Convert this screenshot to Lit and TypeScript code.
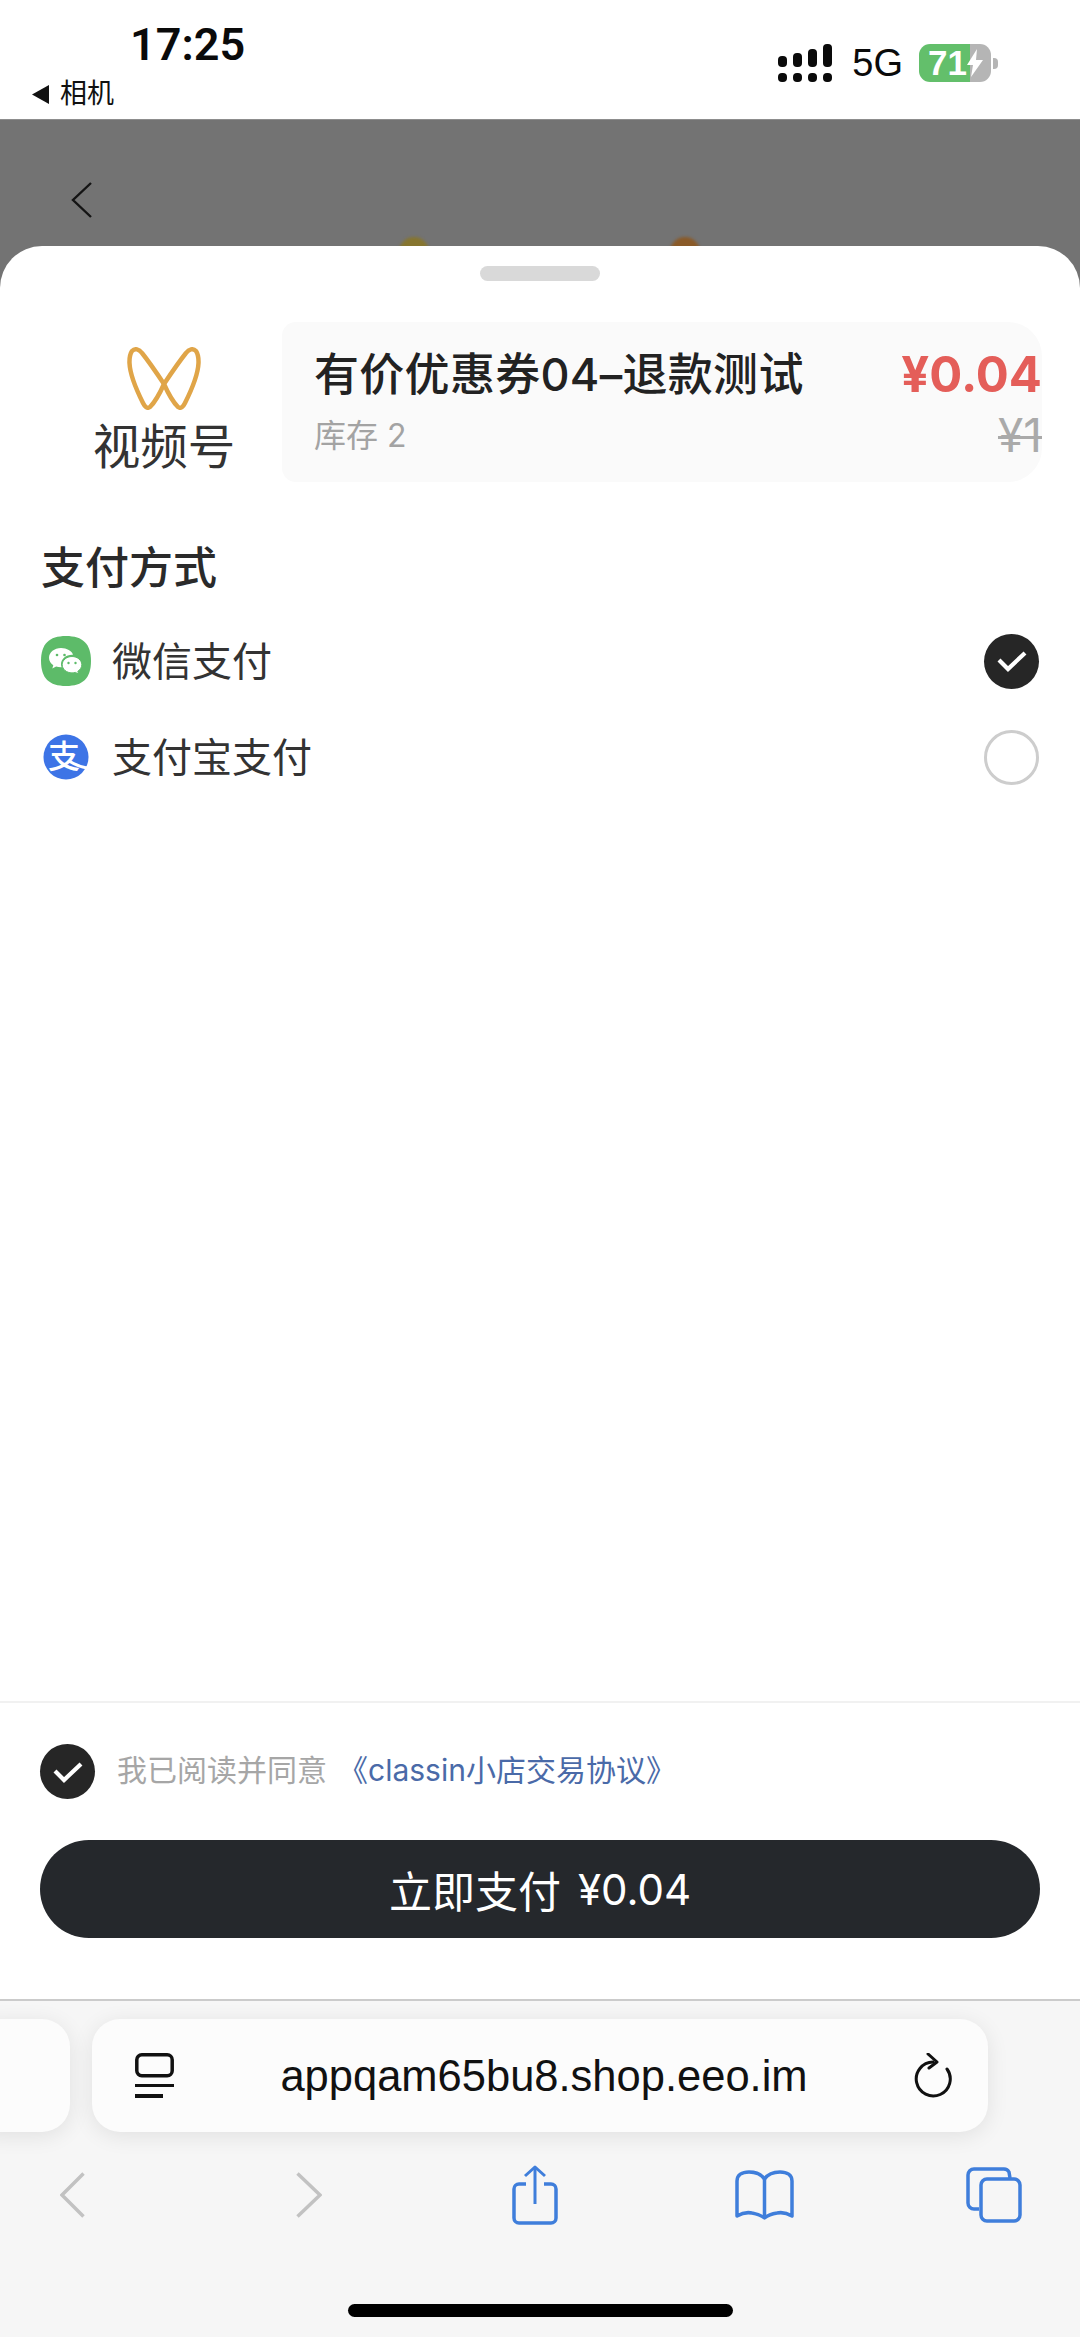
import { css, html, LitElement } from "lit";
import { customElement } from "lit/decorators.js";

const check = html`<svg width="30" height="22" viewBox="0 0 30 22">
  <path d="M2 10l9 9L28 3" fill="none" stroke="#fff" stroke-width="4.200" stroke-linejoin="miter" />
</svg>`;

@customElement("app-root")
export class AppRootElement extends LitElement {
  static styles = css`
    :host {
      display: block;
      width: 1080px;
      height: 2337px;
      overflow: hidden;
      background: #fff;
      font-family: "Inter", "Noto Sans CJK SC", sans-serif;
      color: #333;
    }
    .page {
      display: flex;
      flex-direction: column;
      height: 2337px;
    }

    /* status bar */
    .status {
      height: 119px;
      flex: none;
      display: flex;
      justify-content: space-between;
      box-sizing: border-box;
      background: #fff;
    }
    .status-left {
      display: flex;
      flex-direction: column;
      padding: 21px 0 0 32px;
    }
    .time {
      margin-left: 98px;
      font-size: 45px;
      line-height: 48px;
      font-weight: 600;
      color: #0a0a0a;
      font-family: "Roboto", sans-serif;
    }
    .from {
      display: flex;
      align-items: center;
      gap: 11px;
      margin-top: 11px;
      font-size: 27px;
      line-height: 28px;
      color: #111;
    }
    .status-right {
      display: flex;
      align-items: center;
      height: 38px;
      margin: 44px 82px 0 0;
    }
    .net {
      margin-left: 19px;
      font-size: 38px;
      line-height: 38px;
      color: #0a0a0a;
      font-family: "Liberation Sans", sans-serif;
    }
    .battery {
      position: relative;
      display: flex;
      align-items: center;
      width: 72px;
      height: 38px;
      margin-left: 16px;
      border-radius: 11px;
      background: linear-gradient(90deg, #63bf6b 0 51px, #b5b5b5 51px);
      color: #fff;
      font-size: 35px;
      font-weight: 700;
      line-height: 38px;
      font-family: "Liberation Sans", sans-serif;
    }
    .battery span {
      margin-left: 9px;
    }
    .battery svg {
      position: absolute;
      left: 47px;
      top: 5px;
    }
    .nub {
      width: 5px;
      height: 11px;
      margin-left: 2px;
      border-radius: 0 4px 4px 0;
      background: #b5b5b5;
    }

    /* dimmed page behind the sheet */
    .stage {
      flex: 1;
      display: flex;
      flex-direction: column;
      background: #737373;
      border-top: 1px solid #8d8d8d;
      box-sizing: border-box;
    }
    .under {
      position: relative;
      height: 126px;
      flex: none;
      overflow: hidden;
      padding: 62px 0 0 71px;
      box-sizing: border-box;
    }
    .under svg {
      display: block;
    }
    .blob {
      position: absolute;
      top: 117px;
      width: 30px;
      height: 30px;
      border-radius: 50%;
      filter: blur(1.5px);
    }
    .blob-a {
      left: 399px;
      background: #86752f;
    }
    .blob-b {
      left: 670px;
      background: #8a5a28;
    }

    /* bottom sheet */
    .sheet {
      flex: 1;
      display: flex;
      flex-direction: column;
      background: #fff;
      border-radius: 42px 42px 0 0;
      min-height: 0;
    }
    .handle {
      width: 120px;
      height: 15px;
      margin: 20px auto 0;
      border-radius: 8px;
      background: #d9d9d9;
      flex: none;
    }
    .product {
      display: flex;
      height: 160px;
      margin-top: 41px;
      flex: none;
    }
    .brand {
      width: 282px;
      flex: none;
      display: flex;
      flex-direction: column;
      align-items: center;
      padding: 25px 0 0 46px;
      box-sizing: border-box;
    }
    .brand svg {
      display: block;
    }
    .brand-name {
      margin-top: 11px;
      font-size: 47.500px;
      line-height: 52px;
      color: #333;
      white-space: nowrap;
    }
    .card {
      flex: 1;
      display: flex;
      justify-content: space-between;
      margin-right: 38px;
      padding: 25px 0 0 32px;
      border-radius: 14px 34px 34px 14px;
      background: #fafafa;
    }
    .title {
      font-size: 45px;
      line-height: 56px;
      font-weight: 500;
      letter-spacing: 0.3px;
      color: #222;
      white-space: nowrap;
    }
    .stock {
      margin-top: 13px;
      font-size: 32px;
      line-height: 40px;
      color: #a3a3a3;
    }
    .prices {
      display: flex;
      flex-direction: column;
      align-items: flex-end;
    }
    .price {
      font-size: 49px;
      line-height: 56px;
      font-weight: 700;
      color: #e45e59;
    }
    .price-old {
      margin-top: 10px;
      font-size: 46px;
      line-height: 44px;
      color: #aaa;
      text-decoration: line-through;
      text-decoration-thickness: 3px;
    }

    .methods {
      flex: none;
      padding: 64px 41px 0 41px;
    }
    .methods h2 {
      margin: 0 0 23px 0;
      font-size: 44px;
      line-height: 44px;
      font-weight: 500;
      color: #2a2a2a;
    }
    .method {
      display: flex;
      align-items: center;
      height: 96px;
      gap: 21px;
      font-size: 40px;
      color: #333;
    }
    .method span {
      margin-bottom: 5px;
    }
    .method-icon {
      width: 50px;
      height: 50px;
      flex: none;
      display: block;
    }
    .method .radio {
      margin-left: auto;
    }
    .radio {
      width: 55px;
      height: 55px;
      flex: none;
      box-sizing: border-box;
      display: flex;
      align-items: center;
      justify-content: center;
      border-radius: 50%;
      background: #262626;
    }
    .radio.off {
      background: #fff;
      border: 3px solid #cdcdcd;
    }

    .foot {
      margin-top: auto;
      flex: none;
      border-top: 2px solid #f1f1f1;
      padding: 41px 40px 61px;
    }
    .agree {
      display: flex;
      align-items: center;
      height: 55px;
      font-size: 30px;
      color: #a6a6a6;
      white-space: nowrap;
    }
    .agree span,
    .agree a {
      margin-bottom: 8px;
    }
    .agree .radio {
      margin-right: 22px;
    }
    .agree a {
      margin-left: 11px;
      color: #4a6aa8;
    }
    .pay {
      display: flex;
      align-items: center;
      justify-content: center;
      height: 98px;
      margin-top: 41px;
      border-radius: 49px;
      background: #25282c;
      color: #fff;
      font-size: 43px;
      gap: 17px;
    }
    .pay span:last-child {
      font-size: 42px;
    }

    /* safari chrome */
    .chrome {
      height: 338px;
      flex: none;
      box-sizing: border-box;
      border-top: 2px solid #cbcbcb;
      background: #f6f6f6;
      padding-top: 18px;
      overflow: hidden;
    }
    .tabs-row {
      display: flex;
      gap: 22px;
      height: 113px;
    }
    .tab-prev,
    .url {
      background: #fcfcfc;
      border-radius: 28px;
      box-shadow: 0 4px 22px rgba(0, 0, 0, 0.09);
    }
    .tab-prev {
      width: 100px;
      margin-left: -30px;
      flex: none;
    }
    .url {
      width: 896px;
      flex: none;
      display: flex;
      align-items: center;
      padding: 0 36px 0 43px;
      box-sizing: border-box;
    }
    .url-text {
      flex: 1;
      text-align: center;
      font-family: "Liberation Sans", sans-serif;
      font-size: 43.500px;
      line-height: 48px;
      color: #111;
    }
    .nav {
      display: flex;
      align-items: center;
      height: 60px;
      margin-top: 33px;
      padding-left: 60px;
    }
    .nav svg {
      display: block;
      flex: none;
    }
    .nav-fwd {
      margin-left: 211px;
    }
    .nav-share {
      margin-left: 190px;
    }
    .nav-book {
      margin-left: 177px;
    }
    .nav-tabs {
      margin-left: 172px;
    }
    .home {
      width: 385px;
      height: 13px;
      margin: 79px auto 0;
      border-radius: 7px;
      background: #000;
    }
  `;

  render() {
    return html`<div class="page">
      <div class="status">
        <div class="status-left">
          <div class="time">17:25</div>
          <div class="from">
            <svg width="17" height="19" viewBox="0 0 17 19"><path d="M17 0v19L0 9.5z" fill="#111" /></svg>
            <span>相机</span>
          </div>
        </div>
        <div class="status-right">
          <svg width="55" height="38" viewBox="0 0 55 38">
            <g fill="#0a0a0a">
              <rect x="0" y="12" width="9" height="11" rx="4" />
              <rect x="15" y="9" width="9" height="14" rx="4" />
              <rect x="30" y="5" width="9" height="18" rx="4" />
              <rect x="45" y="0" width="9" height="23" rx="4" />
              <rect x="0" y="29" width="9" height="9" rx="4" />
              <rect x="15" y="29" width="9" height="9" rx="4" />
              <rect x="30" y="29" width="9" height="9" rx="4" />
              <rect x="45" y="29" width="9" height="9" rx="4" />
            </g>
          </svg>
          <span class="net">5G</span>
          <div class="battery">
            <span>71</span>
            <svg width="18" height="28" viewBox="0 0 18 28"><path d="M11 0L1 16h6l-2 12 12-17h-7z" fill="#fff" /></svg>
          </div>
          <div class="nub"></div>
        </div>
      </div>

      <div class="stage">
        <div class="under">
          <svg width="22" height="36" viewBox="0 0 22 36">
            <path d="M20 1L2 18l18 17" fill="none" stroke="#141414" stroke-width="2.400" />
          </svg>
          <div class="blob blob-a"></div>
          <div class="blob blob-b"></div>
        </div>

        <div class="sheet">
          <div class="handle"></div>

          <div class="product">
            <div class="brand">
              <svg width="74" height="63" viewBox="0 0 74 63">
                <g fill="none" stroke="#e0a548" stroke-width="4.500" stroke-linejoin="round">
                  <path d="M5 4C8 1 12 2 15 6 23 16 31 28 37 37 33 46 27 56 23 60 20 62 18 60 16 56 10 44 3 28 2.500 16 2.300 10 3 7 5 4Z" />
                  <path d="M69 4C66 1 62 2 59 6 51 16 43 28 37 37 41 46 47 56 51 60 54 62 56 60 58 56 64 44 71 28 71.500 16 71.700 10 71 7 69 4Z" />
                </g>
              </svg>
              <div class="brand-name">视频号</div>
            </div>
            <div class="card">
              <div>
                <div class="title">有价优惠券04–退款测试</div>
                <div class="stock">库存 2</div>
              </div>
              <div class="prices">
                <div class="price">¥0.04</div>
                <div class="price-old">¥1</div>
              </div>
            </div>
          </div>

          <div class="methods">
            <h2>支付方式</h2>
            <div class="method">
              <svg class="method-icon" viewBox="0 0 50 50">
                <path d="M25 0C42 0 50 8 50 25S42 50 25 50 0 42 0 25 8 0 25 0Z" fill="#5dbb69" />
                <path d="M20 12c-6.600 0-12 4.300-12 9.700 0 3 1.700 5.700 4.300 7.500l-1 3.300 3.800-2c1.500.5 3.100.8 4.900.8h.6c-.4-1-.6-2-.6-3.100 0-5.300 5-9.500 11.100-9.500h.9C30.800 15 25.900 12 20 12Z" fill="#fff" />
                <path d="M31 20.500c-5.400 0-9.800 3.700-9.800 8.200s4.400 8.200 9.800 8.200c1.200 0 2.300-.2 3.400-.5l3.200 1.700-.8-2.800c2.400-1.500 4-3.900 4-6.600 0-4.500-4.400-8.200-9.800-8.200Z" fill="#fff" stroke="#5dbb69" stroke-width="1" />
                <circle cx="16" cy="19" r="1.300" fill="#5dbb69" />
                <circle cx="23.500" cy="19" r="1.300" fill="#5dbb69" />
                <circle cx="27.500" cy="27" r="1.200" fill="#5dbb69" />
                <circle cx="34.500" cy="27" r="1.200" fill="#5dbb69" />
              </svg>
              <span>微信支付</span>
              <div class="radio">${check}</div>
            </div>
            <div class="method">
              <svg class="method-icon" viewBox="0 0 50 50">
                <circle cx="25" cy="25" r="22.500" fill="#3d74e6" />
                <text x="23" y="36" text-anchor="middle" font-size="32" font-weight="500" fill="#fff" font-family="Noto Sans CJK SC, sans-serif">支</text>
                <path d="M28 29c5 3 11 6 18 7" fill="none" stroke="#fff" stroke-width="3" />
              </svg>
              <span>支付宝支付</span>
              <div class="radio off"></div>
            </div>
          </div>

          <div class="foot">
            <div class="agree">
              <div class="radio">${check}</div>
              <span>我已阅读并同意</span>
              <a>《classin小店交易协议》</a>
            </div>
            <div class="pay"><span>立即支付</span><span>¥0.04</span></div>
          </div>
        </div>
      </div>

      <div class="chrome">
        <div class="tabs-row">
          <div class="tab-prev"></div>
          <div class="url">
            <svg width="39" height="45" viewBox="0 0 39 45">
              <rect x="1.800" y="1.800" width="35.400" height="21" rx="5" fill="none" stroke="#111" stroke-width="3.500" />
              <path d="M0 32.500h39" stroke="#111" stroke-width="3" />
              <path d="M0 43h28" stroke="#111" stroke-width="4" />
            </svg>
            <div class="url-text">appqam65bu8.shop.eeo.im</div>
            <svg width="38" height="46" viewBox="0 0 38 46">
              <path d="M19 9A17 17 0 1 0 33 16" fill="none" stroke="#111" stroke-width="3" stroke-linecap="round" />
              <path d="M14 1l9 8-8 6" fill="none" stroke="#111" stroke-width="3" stroke-linecap="round" stroke-linejoin="round" />
            </svg>
          </div>
        </div>
        <div class="nav">
          <svg width="25" height="46" viewBox="0 0 25 46">
            <path d="M23.500 1.500L2 23l21.500 21.500" fill="none" stroke="#c2c2c2" stroke-width="3.500" />
          </svg>
          <svg class="nav-fwd" width="26" height="46" viewBox="0 0 26 46">
            <path d="M1.500 1.500L24 23 1.500 44.500" fill="none" stroke="#c2c2c2" stroke-width="3.500" />
          </svg>
          <svg class="nav-share" width="46" height="60" viewBox="0 0 46 60" fill="none" stroke="#3f7edb" stroke-width="3.500" stroke-linejoin="round">
            <path d="M14 19H7a5 5 0 0 0-5 5v29a5 5 0 0 0 5 5h32a5 5 0 0 0 5-5V24a5 5 0 0 0-5-5h-7" />
            <path d="M23 39V2" stroke-width="3" />
            <path d="M13 11L23 2l10 9" stroke-width="3" />
          </svg>
          <svg class="nav-book" width="59" height="50" viewBox="0 0 59 50" fill="none" stroke="#3f7edb" stroke-width="3.500" stroke-linejoin="round">
            <path d="M29.500 9C26 4 20 2 14 2 7 2 2 5 2 11v35c5-3 10-4 15-3 6 1 10 3 12.500 5 2.500-2 6.500-4 12.500-5 5-1 10 0 15 3V11c0-6-5-9-12-9-6 0-12 2-15.500 7Z" />
            <path d="M29.500 9v39" />
          </svg>
          <svg class="nav-tabs" width="56" height="56" viewBox="0 0 56 56" fill="none" stroke="#3f7edb" stroke-width="3.500">
            <path d="M13 42H8a6 6 0 0 1-6-6V8a6 6 0 0 1 6-6h30a6 6 0 0 1 5 3l1 6" />
            <rect x="15" y="12" width="39" height="42" rx="6" />
          </svg>
        </div>
        <div class="home"></div>
      </div>
    </div>`;
  }
}

declare global {
  interface HTMLElementTagNameMap {
    "app-root": AppRootElement;
  }
}
